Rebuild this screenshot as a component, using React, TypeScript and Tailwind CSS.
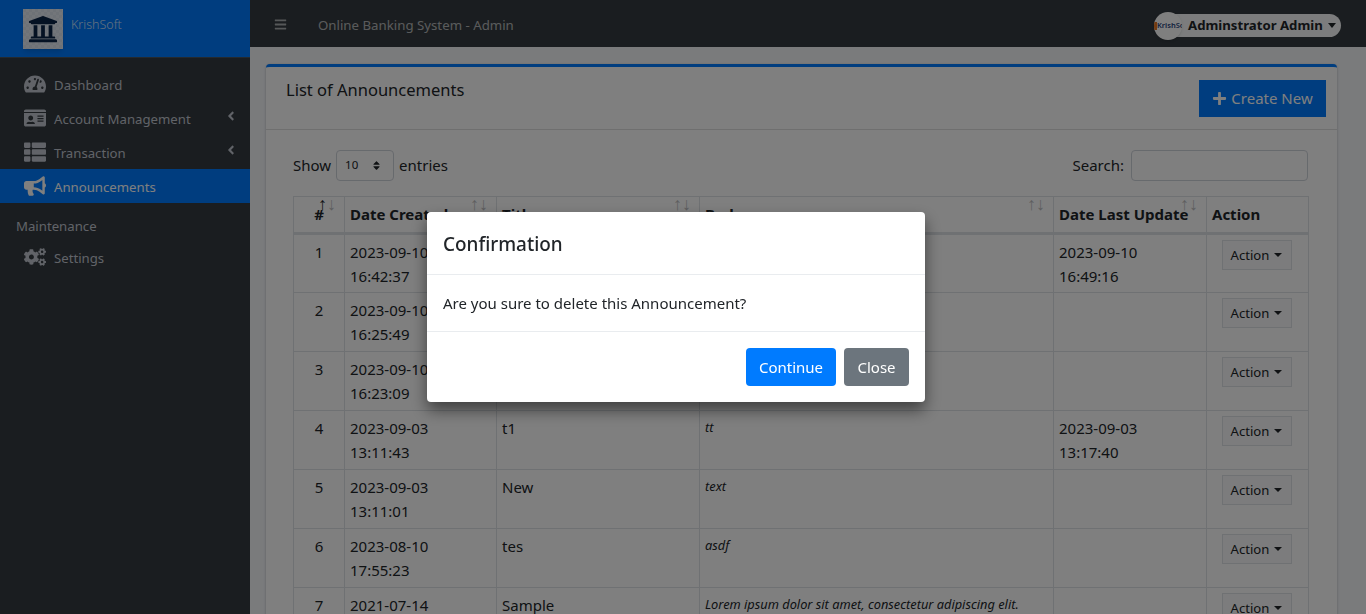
import React from "react";
import { FaTachometerAlt, FaIdCard, FaThList, FaBullhorn, FaCogs, FaAngleLeft, FaBars, FaPlus, FaUniversity, FaSort } from "react-icons/fa";

const rows = [
  { n: 1, d: ["2023-09-10", "16:42:37"], t: "", b: "", u: ["2023-09-10", "16:49:16"] },
  { n: 2, d: ["2023-09-10", "16:25:49"], t: "", b: "", u: [] },
  { n: 3, d: ["2023-09-10", "16:23:09"], t: "", b: "", u: [] },
  { n: 4, d: ["2023-09-03", "13:11:43"], t: "t1", b: "tt", u: ["2023-09-03", "13:17:40"] },
  { n: 5, d: ["2023-09-03", "13:11:01"], t: "New", b: "text", u: [] },
  { n: 6, d: ["2023-08-10", "17:55:23"], t: "tes", b: "asdf", u: [] },
  { n: 7, d: ["2021-07-14", "10:21:00"], t: "Sample", b: "Lorem ipsum dolor sit amet, consectetur adipiscing elit.", u: [] },
];

function Arrows({ active }: { active?: boolean }) {
  return (
    <span className="absolute top-[-3px] right-[8px] flex text-[18px] leading-[20px] font-normal text-[#212529] font-['Liberation_Sans',sans-serif]">
      <span className={active ? "opacity-100" : "opacity-30"}>↑</span>
      <span className="opacity-30">↓</span>
    </span>
  );
}

function NavItem({ icon, label, active, caret }: { icon: React.ReactNode; label: string; active?: boolean; caret?: boolean }) {
  return (
    <div className={`h-[34px] flex items-center pl-6 pr-[12px] text-[13.2px] ${active ? "bg-[#007bff] text-white" : "text-[#c2c7d0]"}`}>
      <span className="w-[22px] flex justify-center text-[22px] mr-[8px]">{icon}</span>
      <span className="flex-1 mt-[1px]">{label}</span>
      {caret && <FaAngleLeft className="text-[14px] mb-[4px]" />}
    </div>
  );
}

export default function App() {
  return (
    <div className="relative h-[614px] w-[1366px] overflow-hidden flex bg-[#f4f6f9] text-[#212529] font-['Noto_Sans','Open_Sans',sans-serif] text-[15px] leading-[24px]">
      <aside className="w-[250px] shrink-0 bg-[#343a40] flex flex-col">
        <div className="h-[58px] shrink-0 bg-[#007bff] border-b border-[#4b545c] flex items-start pl-[23px] pt-[9px]">
          <div className="w-[40px] h-[40px] shadow-md bg-[repeating-conic-gradient(#e6edf5_0_25%,#dde5ef_0_50%)] bg-[length:6px_6px] flex items-center justify-center">
            <FaUniversity className="text-[30px] text-[#0b2447]" />
          </div>
          <span className="ml-[8px] mt-[4px] text-[12.5px] leading-[24px] font-light text-[#ffffffcc]">KrishSoft</span>
        </div>
        <nav className="pt-[9px] flex flex-col">
          <NavItem icon={<FaTachometerAlt />} label="Dashboard" />
          <NavItem icon={<FaIdCard />} label="Account Management" caret />
          <NavItem icon={<FaThList />} label="Transaction" caret />
          <NavItem icon={<FaBullhorn />} label="Announcements" active />
          <div className="h-[37px] pl-4 pt-[11px] text-[13.2px] leading-[24px] text-[#c2c7d0]">Maintenance</div>
          <NavItem icon={<FaCogs />} label="Settings" />
        </nav>
      </aside>

      <div className="flex-1 min-w-0 flex flex-col">
        <header className="h-[47px] shrink-0 bg-[#343a40] flex items-center pl-[24px] pr-[25px]">
          <FaBars className="text-[13px] mt-[2px] text-[#ffffff99]" />
          <span className="ml-[31px] mt-[2px] text-[13.25px] text-[#ffffffa6]">Online Banking System - Admin</span>
          <div className="ml-auto relative h-[23px] w-[181px] mt-[3px] rounded-full bg-[#f8f9fa] flex items-center pl-[28px] text-[13.2px] font-bold text-[#212529] whitespace-nowrap">
            <div className="absolute left-[-6px] top-[-2px] w-[28px] h-[28px] rounded-full bg-white shadow flex items-center overflow-hidden">
              <span className="w-[3px] h-[8px] bg-[#e87722] shrink-0" />
              <span className="text-[7.5px] leading-none font-semibold text-[#1f3f7a] whitespace-nowrap">KrishSo</span>
            </div>
            Adminstrator Admin
            <span className="ml-[5px] w-0 h-0 border-x-[4px] border-x-transparent border-t-[5px] border-t-[#212529]" />
          </div>
        </header>

        <main className="pt-[17px] pl-[16px] pr-[29px]">
          <section className="bg-white rounded-[4px] border-t-[3px] border-[#007bff] shadow-[0_0_1px_rgba(0,0,0,.125),0_1px_3px_rgba(0,0,0,.2)]">
            <div className="h-[63px] border-b border-[#00000020] flex items-start justify-between pl-5 pr-[11px]">
              <h3 className="mt-[10px] text-[16.5px] leading-[26px]">List of Announcements</h3>
              <button className="mt-[13px] h-[37px] w-[127px] bg-[#007bff] text-white flex items-center justify-center gap-[4px]">
                <FaPlus className="text-[15px]" /> <span className="mb-[1px]">Create New</span>
              </button>
            </div>
            <div className="pl-[27px] pr-[29px] pt-[20px]">
              <div className="h-[46px] flex items-start justify-between">
                <div className="flex items-center h-[31px] gap-[5px]">
                  <span className="mb-[2px]">Show</span>
                  <span className="relative w-[58px] h-[31px] border border-[#ced4da] rounded-[4px] text-[11.5px] flex items-center pl-[8px]">
                    <span className="mb-[1px]">10</span>
                    <FaSort className="absolute right-[11px] top-[9px] text-[11px]" />
                  </span>
                  <span className="mb-[2px]">entries</span>
                </div>
                <div className="flex items-center h-[31px] gap-[7px]">
                  <span className="mb-[1px]">Search:</span>
                  <span className="w-[177px] h-[31px] border border-[#ced4da] rounded-[4px]" />
                </div>
              </div>
              <table className="w-[1015px] table-fixed border-collapse">
                <colgroup>
                  <col className="w-[51px]" />
                  <col className="w-[152px]" />
                  <col className="w-[203px]" />
                  <col className="w-[354px]" />
                  <col className="w-[153px]" />
                  <col className="w-[102px]" />
                </colgroup>
                <thead>
                  <tr className="h-[37px] font-bold">
                    <th className="relative border border-[#dee2e6] border-b-[3px] text-center pb-[2px] font-bold">#<Arrows active /></th>
                    <th className="relative border border-[#dee2e6] border-b-[3px] text-left pl-[5px] pb-[2px] font-bold whitespace-nowrap">Date Created<Arrows /></th>
                    <th className="relative border border-[#dee2e6] border-b-[3px] text-left pl-[5px] pb-[2px] font-bold">Title<Arrows /></th>
                    <th className="relative border border-[#dee2e6] border-b-[3px] text-left pl-[5px] pb-[2px] font-bold">Body<Arrows /></th>
                    <th className="relative border border-[#dee2e6] border-b-[3px] text-left pl-[5px] pb-[2px] font-bold whitespace-nowrap">Date Last Update<Arrows /></th>
                    <th className="border border-[#dee2e6] border-b-[3px] text-left pl-[5px] pb-[2px] font-bold">Action</th>
                  </tr>
                </thead>
                <tbody>
                  {rows.map((r) => (
                    <tr key={r.n} className="h-[59px]">
                      <td className="border border-[#dee2e6] align-top text-center pt-[5px]">{r.n}</td>
                      <td className="border border-[#dee2e6] align-top pl-[5px] pt-[5px]">{r.d[0]}<br />{r.d[1]}</td>
                      <td className="border border-[#dee2e6] align-top pl-[5px] pt-[5px]">{r.t}</td>
                      <td className="border border-[#dee2e6] align-top pl-[5px] pt-[7px] text-[12.8px] leading-[18px] italic whitespace-nowrap overflow-hidden">{r.b}</td>
                      <td className="border border-[#dee2e6] align-top pl-[5px] pt-[5px]">{r.u[0]}{r.u[0] && <br />}{r.u[1]}</td>
                      <td className="border border-[#dee2e6] align-top pt-[5px] pr-[2px]">
                        <div className="mx-auto w-[70px] h-[30px] border border-[#dee2e6] bg-[#f8f9fa] text-[13.1px] flex items-center justify-center gap-[5px]">
                          Action
                          <span className="w-0 h-0 border-x-[4px] border-x-transparent border-t-[4px] border-t-[#212529]" />
                        </div>
                      </td>
                    </tr>
                  ))}
                </tbody>
              </table>
            </div>
          </section>
        </main>
      </div>

      <div className="fixed inset-0 bg-black/50" />
      <div className="fixed left-[427px] top-[212px] w-[498px] h-[190px] bg-white rounded-[4px] shadow-[0_8px_16px_rgba(0,0,0,.5)] flex flex-col">
        <div className="h-[63px] border-b border-[#e9ecef] flex items-center px-4">
          <h5 className="mt-[1px] text-[18.9px] leading-[30px] font-medium">Confirmation</h5>
        </div>
        <div className="h-[57px] border-b border-[#e9ecef] flex items-center px-4">Are you sure to delete this Announcement?</div>
        <div className="flex-1 flex items-start justify-end gap-2 pt-4 pr-4">
          <button className="h-[38px] w-[90px] bg-[#007bff] text-white rounded-[4px]">Continue</button>
          <button className="h-[38px] w-[65px] bg-[#6c757d] text-white rounded-[4px]">Close</button>
        </div>
      </div>
    </div>
  );
}
